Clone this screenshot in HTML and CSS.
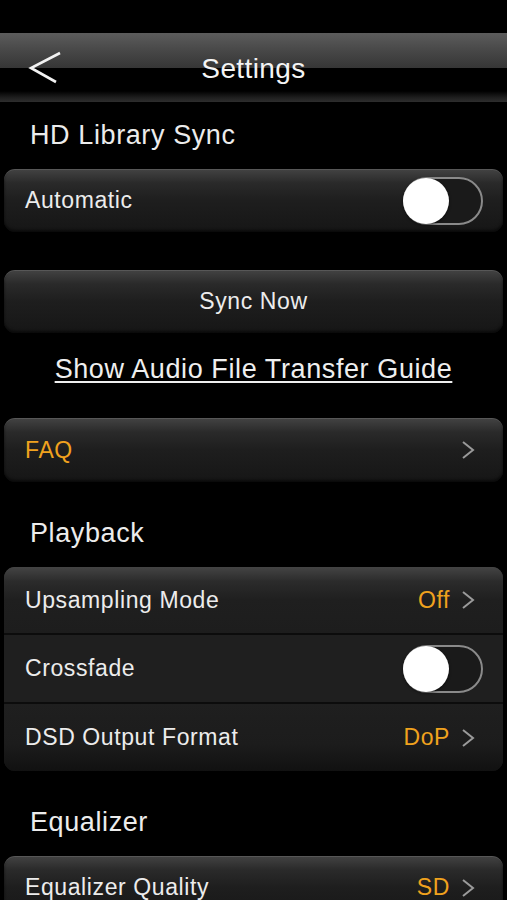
FILE: index.html
```html
<!DOCTYPE html>
<html lang="en">
<head>
    <meta charset="UTF-8">
    <meta name="viewport" content="width=device-width, initial-scale=1.0">
    <title>Settings</title>
    <link rel="stylesheet" href="styles.css">
</head>
<body>

    <div class="status"></div>

    <div class="navbar">
        <div class="back">
            <svg width="36" height="36" viewBox="0 0 36 36">
                <polyline points="33,3 4,18 29,32" fill="none" stroke="#f2f2f2" stroke-width="2.6" stroke-linejoin="miter"/>
            </svg>
        </div>
        <div class="nav-title">Settings</div>
        <div></div>
    </div>

    <h2 class="section">HD Library Sync</h2>
    <div class="card row">
        <span class="label">Automatic</span>
        <div class="toggle"><div class="knob"></div></div>
    </div>

    <div class="card row center sync">
        <span class="label">Sync Now</span>
    </div>

    <div class="guide"><a href="#">Show Audio File Transfer Guide</a></div>

    <div class="card row">
        <span class="label orange">FAQ</span>
        <svg class="chev" width="14" height="20" viewBox="0 0 14 20"><polyline points="2,2 12,10 2,18" fill="none" stroke="#9a9a9a" stroke-width="2"/></svg>
    </div>

    <h2 class="section spaced">Playback</h2>
    <div class="card group">
        <div class="row first">
            <span class="label">Upsampling Mode</span>
            <span class="value">Off <svg class="chev" width="14" height="20" viewBox="0 0 14 20"><polyline points="2,2 12,10 2,18" fill="none" stroke="#9a9a9a" stroke-width="2"/></svg></span>
        </div>
        <div class="row mid">
            <span class="label">Crossfade</span>
            <div class="toggle"><div class="knob"></div></div>
        </div>
        <div class="row last">
            <span class="label">DSD Output Format</span>
            <span class="value">DoP <svg class="chev" width="14" height="20" viewBox="0 0 14 20"><polyline points="2,2 12,10 2,18" fill="none" stroke="#9a9a9a" stroke-width="2"/></svg></span>
        </div>
    </div>

    <h2 class="section spaced">Equalizer</h2>
    <div class="card row">
        <span class="label">Equalizer Quality</span>
        <span class="value">SD <svg class="chev" width="14" height="20" viewBox="0 0 14 20"><polyline points="2,2 12,10 2,18" fill="none" stroke="#9a9a9a" stroke-width="2"/></svg></span>
    </div>

</body>
</html>
```

FILE: styles.css
```css
body {
    margin: 0;
    background-color: black;
    color: #ececec;
    font-family: 'Liberation Sans', Arial, sans-serif;
    overflow: hidden;
}

.status {
    height: 33px;
}

.navbar {
    height: 69px;
    display: grid;
    grid-template-columns: 1fr auto 1fr;
    align-items: center;
    background: linear-gradient(#5c5c5c 0px, #474747 18px, #363636 35px, #000 35px, #000 58px, #1c1c1c 64px, #2e2e2e 69px);
}

.back {
    padding-left: 27px;
    display: flex;
    align-items: center;
}

.nav-title {
    font-size: 28px;
    letter-spacing: 0.4px;
    color: #f4f4f4;
    padding-top: 3px;
}

.section {
    margin: 0;
    height: 67px;
    line-height: 67px;
    padding-left: 30px;
    font-size: 27px;
    letter-spacing: 0.6px;
    font-weight: normal;
    color: #ececec;
}

.section.spaced {
    margin-top: 18px;
}

.card {
    margin: 0 4px;
    border-radius: 11px;
    background: linear-gradient(#434343 0%, #2a2a2a 22%, #1e1e1e 50%, #161616 100%);
    box-shadow: inset 0 1px 0 rgba(255, 255, 255, 0.12), inset 0 -2px 3px rgba(0, 0, 0, 0.6);
}

.row {
    height: 63px;
    display: flex;
    align-items: center;
    justify-content: space-between;
    padding: 0 21px;
}

.row.center {
    justify-content: center;
}

.sync {
    margin-top: 38px;
}

.label {
    font-size: 23px;
    letter-spacing: 0.6px;
}

.orange, .value {
    color: #f0a21e;
}

.value {
    font-size: 23px;
    letter-spacing: 0.6px;
    display: flex;
    align-items: center;
    gap: 11px;
}

.chev {
    display: block;
    margin-right: 7px;
}

.guide {
    height: 73px;
    padding-bottom: 12px;
    display: flex;
    align-items: center;
    justify-content: center;
}

.guide a {
    color: #efefef;
    font-size: 27px;
    letter-spacing: 0.6px;
    text-decoration: underline;
    text-underline-offset: 3px;
    text-decoration-thickness: 2px;
}

.guide + .card {
    height: 64px;
}

.group {
    background: #1f1f1f;
    overflow: hidden;
}

.group .first {
    height: 66px;
    background: linear-gradient(#444 0%, #2b2b2b 22%, #1f1f1f 50%, #1d1d1d 100%);
    border-bottom: 2px solid #0c0c0c;
}

.group .mid {
    height: 67px;
    background: #1f1f1f;
    border-bottom: 2px solid #0c0c0c;
}

.group .last {
    height: 67px;
    background: linear-gradient(#1f1f1f 0%, #1c1c1c 60%, #111 100%);
}

.toggle {
    width: 76px;
    height: 44px;
    border: 2px solid #8a8a8a;
    border-radius: 26px;
    background: #1a1a1a;
    display: flex;
    align-items: center;
    margin-right: -1px;
}

.knob {
    width: 46px;
    height: 46px;
    border-radius: 50%;
    background: white;
    margin-left: -2px;
    box-shadow: 0 1px 3px rgba(0, 0, 0, 0.6);
}
```
